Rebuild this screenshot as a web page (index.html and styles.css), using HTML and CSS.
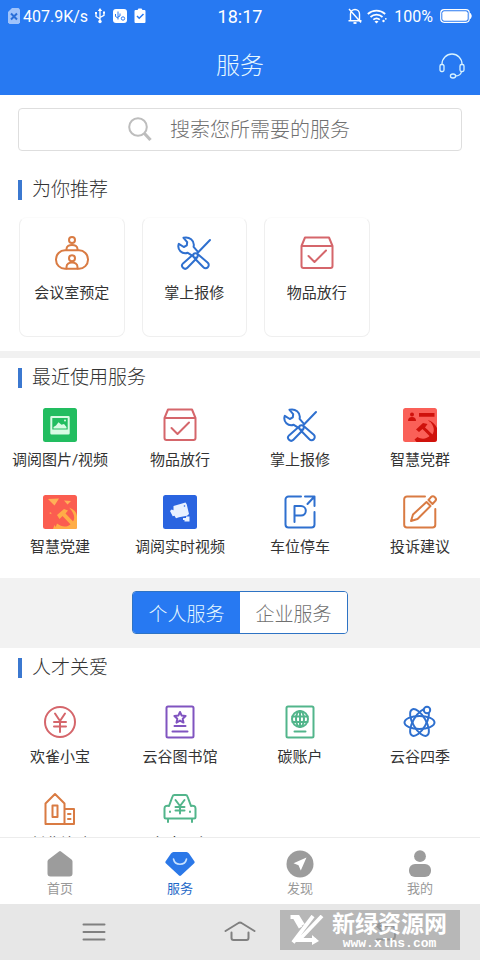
FILE: index.html
```html
<!DOCTYPE html>
<html lang="zh-CN">
<head>
<meta charset="utf-8">
<meta name="viewport" content="width=device-width, initial-scale=1">
<title>服务</title>
<link rel="stylesheet" href="styles.css">
</head>
<body>
<svg class="sprite" aria-hidden="true">
  <symbol id="box" viewBox="0 0 34 34">
    <path d="M1.5 10 5 1.5h24l3.500 8.500v20a2 2 0 0 1-2 2h-27a2 2 0 0 1-2-2zM1.500 10h31M8.500 20l6 6L26 14.500"/>
  </symbol>
  <symbol id="tools" viewBox="0 0 34 34">
    <path d="M6.500 1.800C12 .2 18 4.500 16.600 10.800l3.700 4.400M6.500 1.800l3.700 4.400-.4 3.200-3 1.600-5-3.200C-.2 13.500 5 18.800 10.800 16.800l4.700 3"/>
    <path d="M33 4 20.500 17M21.500 18.800l9.300 8a3 3 0 0 1-4.400 4.500l-8.600-8.800M15.300 19.200l-9.300 8.200a3 3 0 0 0 4.400 4.400l9-9.300"/>
    <circle cx="18.500" cy="19.500" r="2.300"/>
  </symbol>
</svg>
<div class="app">
  <header class="top">
    <div class="status">
      <div class="status-side">
        <svg class="sim" width="12" height="16" viewBox="0 0 12 16"><path d="M4 0h6.500L12 1.500v13L10.500 16h-9L0 14.500V4z" fill="#9fc3fb"/><path d="m3 5.500 6 6m0-6-6 6" stroke="#2a6fd8" stroke-width="2"/></svg>
        <span>407.9K/s</span>
        <svg class="usb" width="12" height="16" viewBox="0 0 12 16" fill="none" stroke="#fff" stroke-width="1.300"><path d="M6 2v11M6 11 2 8.500V5.500M6 9.500l4-2.200V5"/><path d="m6 0 2.200 3H3.800zM1 4h2v2H1zM9 3.500h2v2H9z" fill="#fff" stroke="none"/><circle cx="6" cy="13.500" r="1.700" fill="#fff" stroke="none"/></svg>
        <svg class="gap-s" width="14" height="14" viewBox="0 0 14 14"><rect width="14" height="14" rx="3" fill="#fff"/><g fill="none" stroke="#2779f2"><path d="M5 2.500v8M5 9 2.500 7.500V5M5 8l2-1V4.500"/><circle cx="10" cy="9.500" r="1.700"/></g></svg>
        <svg class="gap-s" width="12" height="16" viewBox="0 0 12 16"><path d="M1.500 2H3.500L4.500.5h3L8.500 2h2A1.200 1.200 0 0 1 11.500 3v11a1.200 1.200 0 0 1-1 1h-9a1.200 1.200 0 0 1-1-1V3a1.200 1.200 0 0 1 1-1z" fill="#fff"/><path d="m3 8 2.200 2.200L9.500 6" fill="none" stroke="#2779f2" stroke-width="1.500"/></svg>
      </div>
      <time class="clock">18:17</time>
      <div class="status-side right">
        <svg width="14" height="16" viewBox="0 0 14 16" fill="none" stroke="#fff" stroke-width="1.400"><path d="M2.500 12.500V6a4.500 4.500 0 0 1 9 0v6.500M.5 12.700h13M1 1l12 13.500"/><path d="M5.500 15h3" stroke-width="1.800"/></svg>
        <svg width="20" height="15" viewBox="0 0 20 15" fill="none" stroke="#fff" stroke-width="1.700"><path d="M.8 5a13 13 0 0 1 17.400 0M3.500 8a9 9 0 0 1 12 0M6.300 10.700a5 5 0 0 1 6.500 0"/><path d="m9.500 14.500-2-2q2-1.500 4 0z" fill="#fff" stroke="none"/><circle cx="16.500" cy="12" r="1.200" fill="#fff" stroke="none"/><circle cx="18.800" cy="9.800" r=".9" fill="#fff" stroke="none"/></svg>
        <span class="pct">100%</span>
        <svg width="32" height="14" viewBox="0 0 32 14"><rect x=".7" y=".7" width="28.600" height="12.600" rx="3.500" fill="none" stroke="#fff" stroke-width="1.200"/><rect x="2.300" y="2.300" width="25.400" height="9.400" rx="2" fill="#fff"/><path d="M30.500 4.500q1.500 2.500 0 5z" fill="#fff" stroke="#fff"/></svg>
      </div>
    </div>
    <div class="titlebar">
      <h1>服务</h1>
      <button class="support" type="button" aria-label="客服">
        <svg width="26" height="26" viewBox="0 0 26 26" fill="none" stroke="#d8f3ff" stroke-width="1.300"><path d="M3 11.500V11a10 10 0 0 1 20 0v.5M22.500 18.500c-.5 3-2.500 4.500-6.500 4.500"/><rect x="1" y="11.500" width="4" height="7" rx="1.500"/><rect x="21" y="11.500" width="4" height="7" rx="1.500"/><ellipse cx="14" cy="23" rx="2.600" ry="2"/></svg>
      </button>
    </div>
  </header>

  <main class="content">
    <label class="search">
      <svg width="24" height="25" viewBox="0 0 24 25" fill="none" stroke="#bdbdbd"><circle cx="10" cy="10" r="8.800" stroke-width="2"/><path d="m16.500 16.500 6 6.500" stroke-width="3.200"/></svg>
      <input type="text" aria-label="搜索" placeholder="搜索您所需要的服务">
    </label>

    <section class="recommend">
      <h2>为你推荐</h2>
      <div class="cards">
        <a class="item card orange" href="#"><svg class="icon" viewBox="0 0 34 34"><circle cx="17" cy="4" r="3"/><path d="M11.500 14v-1c0-5.500 11-5.500 11 0v1M11.500 32.500v-1.500c0-6 11-6 11 0v1.500"/><circle cx="17" cy="22.300" r="3"/><rect x="1" y="14.300" width="32" height="18.500" rx="9"/></svg><span>会议室预定</span></a>
        <a class="item card blue" href="#"><svg class="icon"><use href="#tools"/></svg><span>掌上报修</span></a>
        <a class="item card red" href="#"><svg class="icon"><use href="#box"/></svg><span>物品放行</span></a>
      </div>
    </section>

    <section class="recent">
      <h2>最近使用服务</h2>
      <div class="grid">
        <a class="item" href="#"><svg class="solid" viewBox="0 0 34 34"><rect width="34" height="34" rx="2.500" fill="#22bd60"/><path fill="#d9fbe4" fill-rule="evenodd" d="M8.500 8h17a1.200 1.200 0 0 1 1.200 1.200v16a1.200 1.200 0 0 1-1.200 1.200h-17a1.200 1.200 0 0 1-1.200-1.200v-16A1.200 1.200 0 0 1 8.500 8zm.8 2v11.500h15.400V10z"/><path fill="#d9fbe4" d="M10.500 20.500v-1.500l2.500-1.500 2.500-3.300 3 2.500 2.500-.8 2.500 3v1.600z"/><circle cx="22" cy="12.500" r="1" fill="#d9fbe4"/></svg><span>调阅图片/视频</span></a>
        <a class="item red" href="#"><svg class="icon"><use href="#box"/></svg><span>物品放行</span></a>
        <a class="item blue" href="#"><svg class="icon"><use href="#tools"/></svg><span>掌上报修</span></a>
        <a class="item" href="#"><svg class="solid" viewBox="0 0 34 34"><rect width="34" height="34" rx="2.500" fill="#fa6058"/><g fill="#cf120c"><circle cx="9" cy="6.500" r="2"/><path d="M5 13q0-4 4-4t4 4zM16 5h15.500v3.800H16z"/><path d="m13 21.500 7-6.500 4.500 1-2.500 3.500L33 29l-2.500 3-11-11-3.500 3z"/><path d="M25 12c5 5 6 11 2.500 15-4 4.500-9 4.500-13 2l-3 2.500 2 2.500h17.500q3 0 3-3V20c-2-4-5-6.500-9-8z"/></g><path d="M26.500 13c4.500 5 5.500 9 3 13.500l-4-4c1.500-3 2-6 1-9.500zM16 29.500c3 .5 6.500 0 9-2l-4-4.500z" fill="#fa6058"/></svg><span>智慧党群</span></a>
        <a class="item" href="#"><svg class="solid" viewBox="0 0 34 34"><rect width="34" height="34" rx="2.500" fill="#fb5d50"/><path d="m5 4 11-.5-4.500 7zM21 5.500l7 .5-3.500 3.500zM6 18l2-.8.5 2z" fill="#ffb057"/><g fill="#ffad47"><path d="m14 20 7-6 4 1.500-2.500 3L33 29.500 30 32 19.500 21l-3 3z"/><path d="M26 12.500c5 2 8 5 8 9v11q0 1.500-1.500 1.500H12l2-5.500c5 4 10 4 14 .5 5-5 4-10-2-16.500zM11.500 30l2.500 4h-4z"/></g></svg><span>智慧党建</span></a>
        <a class="item" href="#"><svg class="solid" viewBox="0 0 34 34"><rect width="34" height="34" rx="2.500" fill="#2a64e0"/><path fill="#e8f1ff" d="m10.500 11 12-3.500 1.200 1.800L26 19l-2 1.700-8 1.500-3 1-1.500-2.500-1.800.6L7 16l1.600-1.500 1.900.8zM23 21.500h3.500v5h-5V25H20v-2h3z"/><circle cx="21.500" cy="11" r=".8" fill="#2a64e0"/></svg><span>调阅实时视频</span></a>
        <a class="item blue" href="#"><svg class="icon" viewBox="0 0 34 34"><path d="M18 1.500H5.500a3 3 0 0 0-3 3v25a3 3 0 0 0 3 3h23a3 3 0 0 0 3-3V17M22 1.500h9.500V11M31 2l-6.500 7M11.500 27V11H18a4.800 4.800 0 0 1 0 9.600h-6.500"/></svg><span>车位停车</span></a>
        <a class="item orange" href="#"><svg class="icon" viewBox="0 0 34 34"><path d="M22 1.500H4a2.800 2.800 0 0 0-2.800 2.800v25.500a2.800 2.800 0 0 0 2.800 2.800h25.500a2.800 2.800 0 0 0 2.800-2.800V14M8 26l2-6.500L23.500 7l4 4L14.500 24zM25.500 5l2.300-2.700a2.900 2.900 0 0 1 4.200 4L29.500 9z"/></svg><span>投诉建议</span></a>
      </div>
    </section>

    <div class="switch">
      <div class="segments">
        <button class="segment active" type="button">个人服务</button>
        <button class="segment" type="button">企业服务</button>
      </div>
    </div>

    <section class="talent">
      <h2>人才关爱</h2>
      <div class="grid">
        <a class="item red" href="#"><svg class="icon" viewBox="0 0 34 34"><circle cx="17" cy="17" r="15"/><path d="m12 8.500 5 7.500 5-7.500M17 16v11M11 17h12M11 21.500h12"/></svg><span>欢雀小宝</span></a>
        <a class="item purple" href="#"><svg class="icon" viewBox="0 0 34 34"><rect x="3.500" y="1.500" width="27" height="31" rx="1.500"/><path d="m17 7 1.700 3.600 3.900.4-2.900 2.700.8 3.900-3.500-2-3.500 2 .8-3.900-2.900-2.700 3.900-.4zM11.500 21h11M9.500 26.500h15"/></svg><span>云谷图书馆</span></a>
        <a class="item green" href="#"><svg class="icon" viewBox="0 0 34 34"><rect x="3.500" y="1.500" width="27" height="31" rx="1.500"/><circle cx="17" cy="14" r="8"/><ellipse cx="17" cy="14" rx="4" ry="8"/><path d="M17 6v16M9.500 11.500h15M9.500 17h15M11.500 26.500h11"/></svg><span>碳账户</span></a>
        <a class="item blue" href="#"><svg class="icon" viewBox="0 0 34 34"><g transform="translate(-.5 .5)"><ellipse cx="17" cy="17" rx="15" ry="6.500"/><ellipse cx="17" cy="17" rx="15" ry="6.500" transform="rotate(60 17 17)"/><ellipse cx="17" cy="17" rx="15" ry="6.500" transform="rotate(120 17 17)"/></g><circle cx="24" cy="5" r="3.200" fill="#fff"/></svg><span>云谷四季</span></a>
        <a class="item orange" href="#"><svg class="icon" viewBox="0 0 34 34"><path d="M2.500 32V11.500L12 2l9.500 9.500V32zM21.500 17H31v15h-9.500M9.500 13.500h5V25h-5zM25 22h2.500M25 27h2.500"/></svg><span>创业补贴</span></a>
        <a class="item green" href="#"><svg class="icon" viewBox="0 0 34 34"><path d="M6 14 9.500 4.500q.5-1.500 2-1.500h11q1.500 0 2 1.500L28 14M6 14q-4.500-1-4.500 2.500V25q0 1.500 1.500 1.500h28q1.500 0 1.500-1.500v-8.500Q32.500 13 28 14M5 27v3M29 27v3M12.500 8l4.500 6 4.500-6M17 14v7.500M12.500 15h9M12.500 18.500h9M7 19.500v.5M27 19.500v.5"/></svg><span>人才用车</span></a>
      </div>
    </section>
  </main>

  <nav class="tabs">
    <a href="#"><svg viewBox="0 0 28 28"><path d="M13 1.400q1-.8 2 0L25.500 9.500q1 .8 1 2V23.500q0 3-3 3h-19q-3 0-3-3V11.500q0-1.200 1-2z"/></svg><span>首页</span></a>
    <a class="current" href="#"><svg width="32" viewBox="-1 0 32 28"><path d="M6 3.500q1-1.500 2.500-1.500h13q1.500 0 2.500 1.500l5.500 8q.5 1-.3 1.800L16 25.500q-1 .8-2 0L.8 13.300Q0 12.500.5 11.500z"/><path d="M8.500 9c1.500 7 11.500 7 13 0" fill="none" stroke="#c8e2ff" stroke-width="1.600" stroke-linecap="round"/></svg><span>服务</span></a>
    <a href="#"><svg viewBox="0 0 28 28"><circle cx="14" cy="14" r="13.500"/><path d="m20.500 7.500-5.700 13-2.300-5.300-5-2z" fill="#fff"/></svg><span>发现</span></a>
    <a href="#"><svg viewBox="0 0 28 28"><circle cx="14" cy="6.200" r="5.900"/><rect x="3" y="14" width="22" height="13" rx="6"/></svg><span>我的</span></a>
  </nav>

  <footer class="sysnav">
    <button type="button" aria-label="菜单"><svg width="32" height="24" viewBox="0 0 32 24"><path d="M5.500 4.500h21M5.500 12h21M5.500 19.500h21"/></svg></button>
    <button type="button" aria-label="主屏幕"><svg width="32" height="24" viewBox="0 0 32 24"><path d="M1.500 11 14.500 3q1.500-.8 3 0l13 8M7.500 12.500v5.500q0 2 2 2h13q2 0 2-2v-5.500"/></svg></button>
    <button type="button" aria-label="返回"><svg width="32" height="24" viewBox="0 0 32 24"><path d="M7 6h14q4 0 4 4v6q0 3.500-4 3.500H7M11.500 1.500 7 6l4.500 4.500"/></svg></button>
    <div class="watermark">
      <svg width="36" height="30" viewBox="0 0 36 30" fill="none" stroke="#fff" stroke-width="3.800"><path d="M1.500 2h7.500l5 8M6 3l5.500 9.500M33 1 10 25h17M24 1 4 27.500"/><path d="m23 20 7 6-7 4z" fill="#fff" stroke="none"/></svg>
      <div class="mark-text"><strong>新绿资源网</strong><span>www.xlhs.com</span></div>
    </div>
  </footer>
</div>
</body>
</html>
```
FILE: styles.css
```css
* { box-sizing: border-box; }
body {
  margin: 0;
  background: #fff;
  color: #333;
  font-family: Roboto, "Noto Sans CJK SC", sans-serif;
}
a { color: inherit; text-decoration: none; }
button, input { font: inherit; }
h1, h2 { margin: 0; font-weight: 300; }
svg { display: block; flex: none; }
.sprite { position: absolute; width: 0; height: 0; }

.app { display: flex; flex-direction: column; height: 100vh; }

.top { flex: none; background: #2779f2; color: #fff; }
.status {
  display: grid;
  grid-template-columns: 1fr auto 1fr;
  align-items: center;
  height: 32px;
  padding: 0 8px;
  font-size: 16px;
}
.status-side { display: flex; align-items: center; gap: 3px; }
.status-side.right { justify-content: flex-end; gap: 5px; }
.usb { margin-left: 3px; }
.gap-s { margin-left: 4px; }
.pct { margin: 0 2px; }
.clock { font-size: 18px; }
.titlebar {
  display: grid;
  grid-template-columns: 1fr auto 1fr;
  align-items: center;
  height: 63px;
  padding: 4px 15px 0;
}
.titlebar h1 { grid-column: 2; font-size: 24px; line-height: 36px; color: #e6f8ff; }
.support { justify-self: end; padding: 0; border: 0; background: none; }

.content { flex: 1; min-height: 0; overflow: hidden; }
.search {
  display: flex;
  align-items: center;
  justify-content: center;
  gap: 18px;
  height: 43px;
  margin: 13px 18px 25px;
  border: 1px solid #dedede;
  border-radius: 4px;
}
.search input {
  width: 182px;
  padding: 0;
  border: 0;
  outline: 0;
  background: none;
  font-size: 20px;
  font-weight: 300;
  line-height: 30px;
}
.search input::placeholder { color: #707070; opacity: 1; }

h2 {
  display: flex;
  align-items: center;
  gap: 10px;
  padding-left: 18px;
  font-size: 19px;
  line-height: 28px;
}
h2::before { content: ""; width: 4px; height: 20px; background: #3b78d0; }

.item {
  display: flex;
  flex-direction: column;
  align-items: center;
  gap: 8px;
  font-size: 15px;
  line-height: 20px;
  white-space: nowrap;
}
.item svg { width: 34px; height: 34px; }
.icon {
  fill: none;
  stroke: currentColor;
  stroke-width: 2;
  stroke-linecap: round;
  stroke-linejoin: round;
}
.item span { color: #333; }
.orange { color: #d97b43; }
.blue { color: #2f70cf; }
.red { color: #d5666b; }
.purple { color: #8054c0; }
.green { color: #52b58b; }

.recommend { padding-bottom: 14px; }
.cards {
  display: grid;
  grid-template-columns: repeat(4, 1fr);
  gap: 17px;
  margin: 13px -12px 0 19px;
}
.card {
  gap: 13px;
  height: 120px;
  padding-top: 18px;
  border: 1px solid #efefef;
  border-top-color: #fbfbfb;
  border-radius: 8px;
}

.recent { padding: 6px 0 21px; border-top: 7px solid #f1f1f1; }
.grid { display: grid; grid-template-columns: repeat(4, 1fr); row-gap: 25px; }
.recent .grid { margin-top: 16px; }
.talent { padding-top: 6px; }
.talent .grid { margin-top: 23px; }

.switch { display: flex; justify-content: center; padding: 13px 0 14px; background: #f2f2f2; }
.segments {
  display: flex;
  width: 45%;
  height: 43px;
  overflow: hidden;
  border: 1px solid #2e73c4;
  border-radius: 4px;
}
.segment {
  flex: 1;
  padding: 0;
  border: 0;
  background: #fff;
  color: #707070;
  font-size: 19px;
  font-weight: 300;
}
.segment.active { background: #2779f2; color: #e6f8ff; }

.tabs {
  display: grid;
  flex: none;
  grid-template-columns: repeat(4, 1fr);
  height: 67px;
  border-top: 1px solid #ececec;
  background: #fff;
}
.tabs a {
  display: flex;
  flex-direction: column;
  align-items: center;
  padding-top: 12px;
  color: #999;
  font-size: 13px;
  line-height: 22px;
}
.tabs svg { height: 28px; fill: #9c9c9c; }
.tabs .current { color: #1f69c8; }
.tabs .current svg { fill: #2b78e8; }

.sysnav {
  position: relative;
  display: flex;
  flex: none;
  align-items: center;
  justify-content: space-between;
  height: 56px;
  padding: 0 78px;
  background: #e7e7e7;
}
.sysnav button { padding: 0; border: 0; background: none; }
.sysnav button svg { fill: none; stroke: #808080; stroke-width: 2; stroke-linecap: round; }
.watermark {
  position: absolute;
  right: 20px;
  bottom: 10px;
  display: flex;
  align-items: center;
  gap: 7px;
  width: 180px;
  height: 40px;
  padding-left: 9px;
  background: rgba(157, 157, 157, 0.65);
  color: #fff;
}
.mark-text { display: flex; flex-direction: column; align-items: center; }
.mark-text strong { font-size: 23px; line-height: 28px; }
.mark-text span { font: bold 13px/10px "Liberation Mono", monospace; }
```
